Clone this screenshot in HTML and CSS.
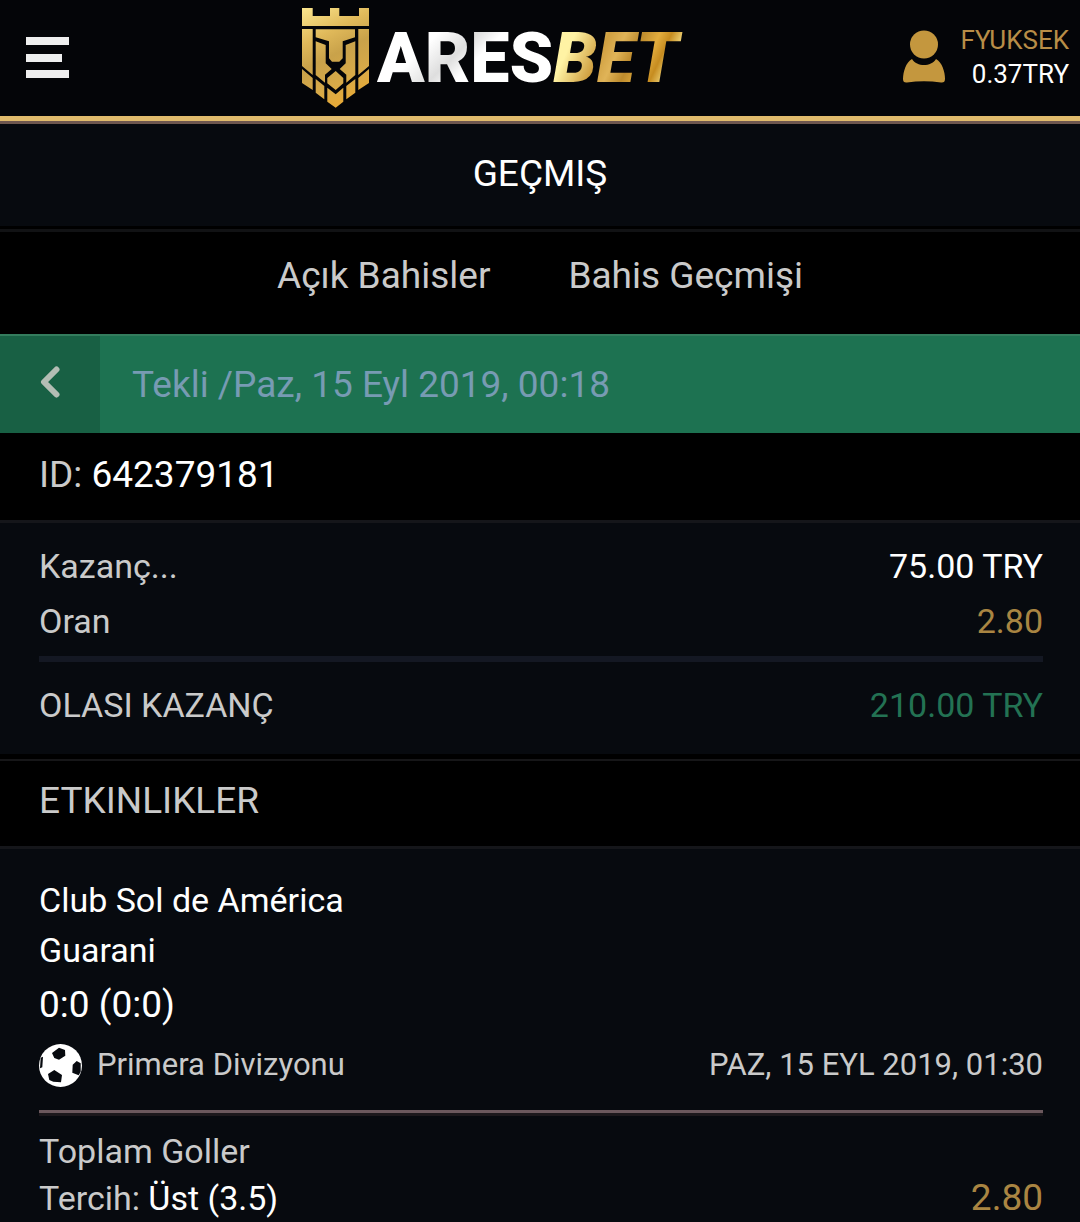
FILE: index.html
```html
<!DOCTYPE html>
<html lang="tr">
<head>
<meta charset="utf-8">
<meta name="viewport" content="width=device-width, initial-scale=1">
<title>Aresbet</title>
<link rel="stylesheet" href="styles.css">
</head>
<body>
<header class="topbar">
  <button class="menu" type="button" aria-label="Menü">
    <svg width="44" height="42" viewBox="0 0 44 42" fill="#efefef"><path d="M0 0h43v8H0zM0 17h36v8H0zM0 33h43v8H0z"/></svg>
  </button>
  <a class="logo" href="#">
    <svg class="shield" width="68" height="101" viewBox="0 0 68 101">
      <defs>
        <linearGradient id="gold" gradientUnits="userSpaceOnUse" x1="0" y1="0" x2="50" y2="100">
          <stop offset="0" stop-color="#fbe68e"/><stop offset="0.3" stop-color="#e0b95a"/>
          <stop offset="0.5" stop-color="#c9a24a"/><stop offset="0.75" stop-color="#d8aa48"/><stop offset="1" stop-color="#eda92f"/>
        </linearGradient>
      </defs>
      <path fill="url(#gold)" d="M0 0H10.700V8H28V0H37.300V8H57V0H67V18H0ZM0 21H10.700V67L0 58ZM56.300 21H67V58L56.300 67ZM13.700 21.300H53V29.300L40.700 33.300V50.300L37.300 53.700H30L27 50.300V33.300L13.700 29.300ZM13.700 33.300L23.700 37V55.300L29.700 61L23 66.700V74.700L13.700 67ZM53.300 33.300L43.700 37V55.300L37.700 61L44.300 66.700V74.700L53.300 67ZM33.700 63L41.300 70V75.300L33.700 82L25.300 75.300V70ZM0 61L10.700 70V82L0 75ZM67 61L56.300 70V82L67 75ZM13.700 71L22.300 78V91.300L13.700 84.700ZM53.300 71L44.300 78V91.300L53.300 84.700ZM25.300 79.700L33.700 86.300L41.300 79.700V93.700L33.700 99.700L25.300 93.700Z"/>
    </svg>
    <span class="wordmark"><span class="silver">ARES</span><span class="gold">BET</span></span>
  </a>
  <a class="account" href="#">
    <svg width="42" height="54" viewBox="0 0 42 54" fill="#c4973e"><circle cx="21" cy="14.500" r="14"/><path d="M9 29C14 37 28 37 33 29C39 32 42 42 42 49Q42 53 38 52.500Q21 50 4 52.500Q0 53 0 49C0 42 3 32 9 29Z"/></svg>
    <span class="account-text"><span class="user">FYUKSEK</span><span>0.37TRY</span></span>
  </a>
</header>

<main>
  <h1 class="title">GEÇMIŞ</h1>
  <nav class="tabs"><a href="#">Açık Bahisler</a><a href="#">Bahis Geçmişi</a></nav>
  <div class="ticket">
    <button class="back" type="button" aria-label="Geri">
      <svg width="20" height="34" viewBox="0 0 20 34" fill="none" stroke="#b3bdb4" stroke-width="6" stroke-linecap="round" stroke-linejoin="round"><path d="M16.500 4.500L4 17L16.500 29.500"/></svg>
    </button>
    <h2 class="ticket-title">Tekli /Paz, 15 Eyl 2019, 00:18</h2>
  </div>
  <p class="bar">ID: <span class="strong">642379181</span></p>

  <dl class="totals">
    <div class="row"><dt>Kazanç...</dt><dd class="strong">75.00 TRY</dd></div>
    <div class="row"><dt>Oran</dt><dd class="odds">2.80</dd></div>
    <div class="row sum"><dt>OLASI KAZANÇ</dt><dd class="win">210.00 TRY</dd></div>
  </dl>

  <h2 class="bar events">ETKINLIKLER</h2>
  <section class="event">
    <p class="team">Club Sol de América</p>
    <p class="team">Guarani</p>
    <p class="score">0:0 (0:0)</p>
    <div class="league">
      <svg width="43" height="43" viewBox="0 0 43 43"><circle cx="21.500" cy="21.500" r="21.500" fill="#fff"/><path fill="#070a0f" d="M13 9L20 3.700L26 6L26.300 11.700L20 15.700L15.300 14ZM15.300 26L23 31L22 38.300L14.300 37.700L10.300 36L9 30ZM37.700 17L41.700 19.300V27.700L39.700 31.300L33.300 28.700L33.700 20.700ZM1.700 13.700L4 12.700L3.300 23.300L1 24.300Z"/></svg>
      <span>Primera Divizyonu</span>
      <time datetime="2019-09-15T01:30">PAZ, 15 EYL 2019, 01:30</time>
    </div>
    <p class="market">Toplam Goller</p>
    <div class="pick"><span>Tercih: <span class="strong">Üst (3.5)</span></span><span class="odds pick-odds">2.80</span></div>
  </section>
</main>
</body>
</html>
```
FILE: styles.css
```css
* { box-sizing: border-box; }
body {
  margin: 0;
  background: #070a0f;
  color: #cacaca;
  font-family: Roboto, "Liberation Sans", sans-serif;
  font-size: 34px;
}
h1, h2, p, dl, dd { margin: 0; font-weight: 400; }
a { color: inherit; text-decoration: none; }
button { border: 0; padding: 0; background: none; }
svg { display: block; flex: none; }

.topbar {
  display: grid;
  grid-template-columns: 5fr auto 7fr;
  align-items: center;
  height: 124px;
  padding: 0 11px 0 26px;
  background: #040508;
  border-bottom: 3px solid #6e574f;
  box-shadow: inset 0 -5px #e0bb6c;
}
.menu { justify-self: start; padding-bottom: 6px; }
.logo {
  display: flex;
  align-items: center;
  gap: 7px;
  padding-bottom: 5px;
}
.wordmark {
  display: flex;
  font-size: 70px;
  font-weight: 900;
  line-height: 84px;
}
.silver, .gold {
  color: transparent;
  -webkit-background-clip: text;
  background-clip: text;
}
.silver { background-image: linear-gradient(135deg, #fff 30%, #dedede 45%, #fff 55%); }
.gold {
  padding-right: 4px;
  font-style: italic;
  background-image: linear-gradient(115deg, #fff3a4 18%, #cf9f40 38%, #e0b458 48%, #bd8b2d 58%, #e2ad3e 68%, #c68c20 75%, #fff09a 86%, #d79c2b 95%);
}
.account {
  justify-self: end;
  display: flex;
  align-items: center;
  gap: 16px;
  font-size: 26px;
  line-height: 34px;
  color: #fff;
  padding-bottom: 8px;
}
.account-text { display: flex; flex-direction: column; align-items: flex-end; }
.user { color: #b88d47; }

.title {
  padding: 29px 0 31px;
  font-size: 37px;
  line-height: 42px;
  text-align: center;
  color: #fff;
}
.tabs {
  display: flex;
  justify-content: center;
  gap: 78px;
  padding: 23px 0 37px;
  font-size: 37px;
  line-height: 42px;
  background: #000;
  border-top: 3px solid #111214;
  box-shadow: 0 -3px #000;
  margin-top: 3px;
}
.ticket {
  display: flex;
  height: 99px;
  background: #1d7251;
  border-top: 2px solid #347c5d;
}
.back {
  display: grid;
  place-items: center;
  width: 100px;
  padding-bottom: 6px;
  background: #186044;
}
.ticket-title {
  padding-left: 32px;
  font-size: 37px;
  line-height: 97px;
  color: #779bb3;
}
.bar {
  padding: 21px 39px 24px;
  font-size: 37px;
  line-height: 42px;
  background: #000;
  border-bottom: 3px solid #15161a;
}
.strong { color: #fff; }
.odds { color: #a98542; }
.win { color: #237253; }
.totals { padding: 16px 37px 20px 39px; }
.row { display: flex; justify-content: space-between; line-height: 55px; }
.sum { margin-top: 7px; padding-top: 16px; border-top: 6px solid #141823; }
.events {
  padding: 19px 39px 24px;
  border-top: 2px solid #161618;
  box-shadow: 0 -5px #000;
  margin-top: 6px;
}
.event { padding: 26px 37px 0 39px; }
.team { line-height: 50px; }
.team, .score { color: #fff; }
.score { font-size: 37px; line-height: 60px; }
.league {
  display: flex;
  align-items: center;
  gap: 15px;
  font-size: 31px;
  line-height: 60px;
  padding-bottom: 15px;
  border-bottom: 3px solid #6b585d;
  box-shadow: 0 3px #1c181c;
}
.league time { margin-left: auto; }
.market { padding-top: 14px; line-height: 48px; }
.pick { display: flex; justify-content: space-between; line-height: 46px; }
.pick-odds { font-size: 37px; }
```
